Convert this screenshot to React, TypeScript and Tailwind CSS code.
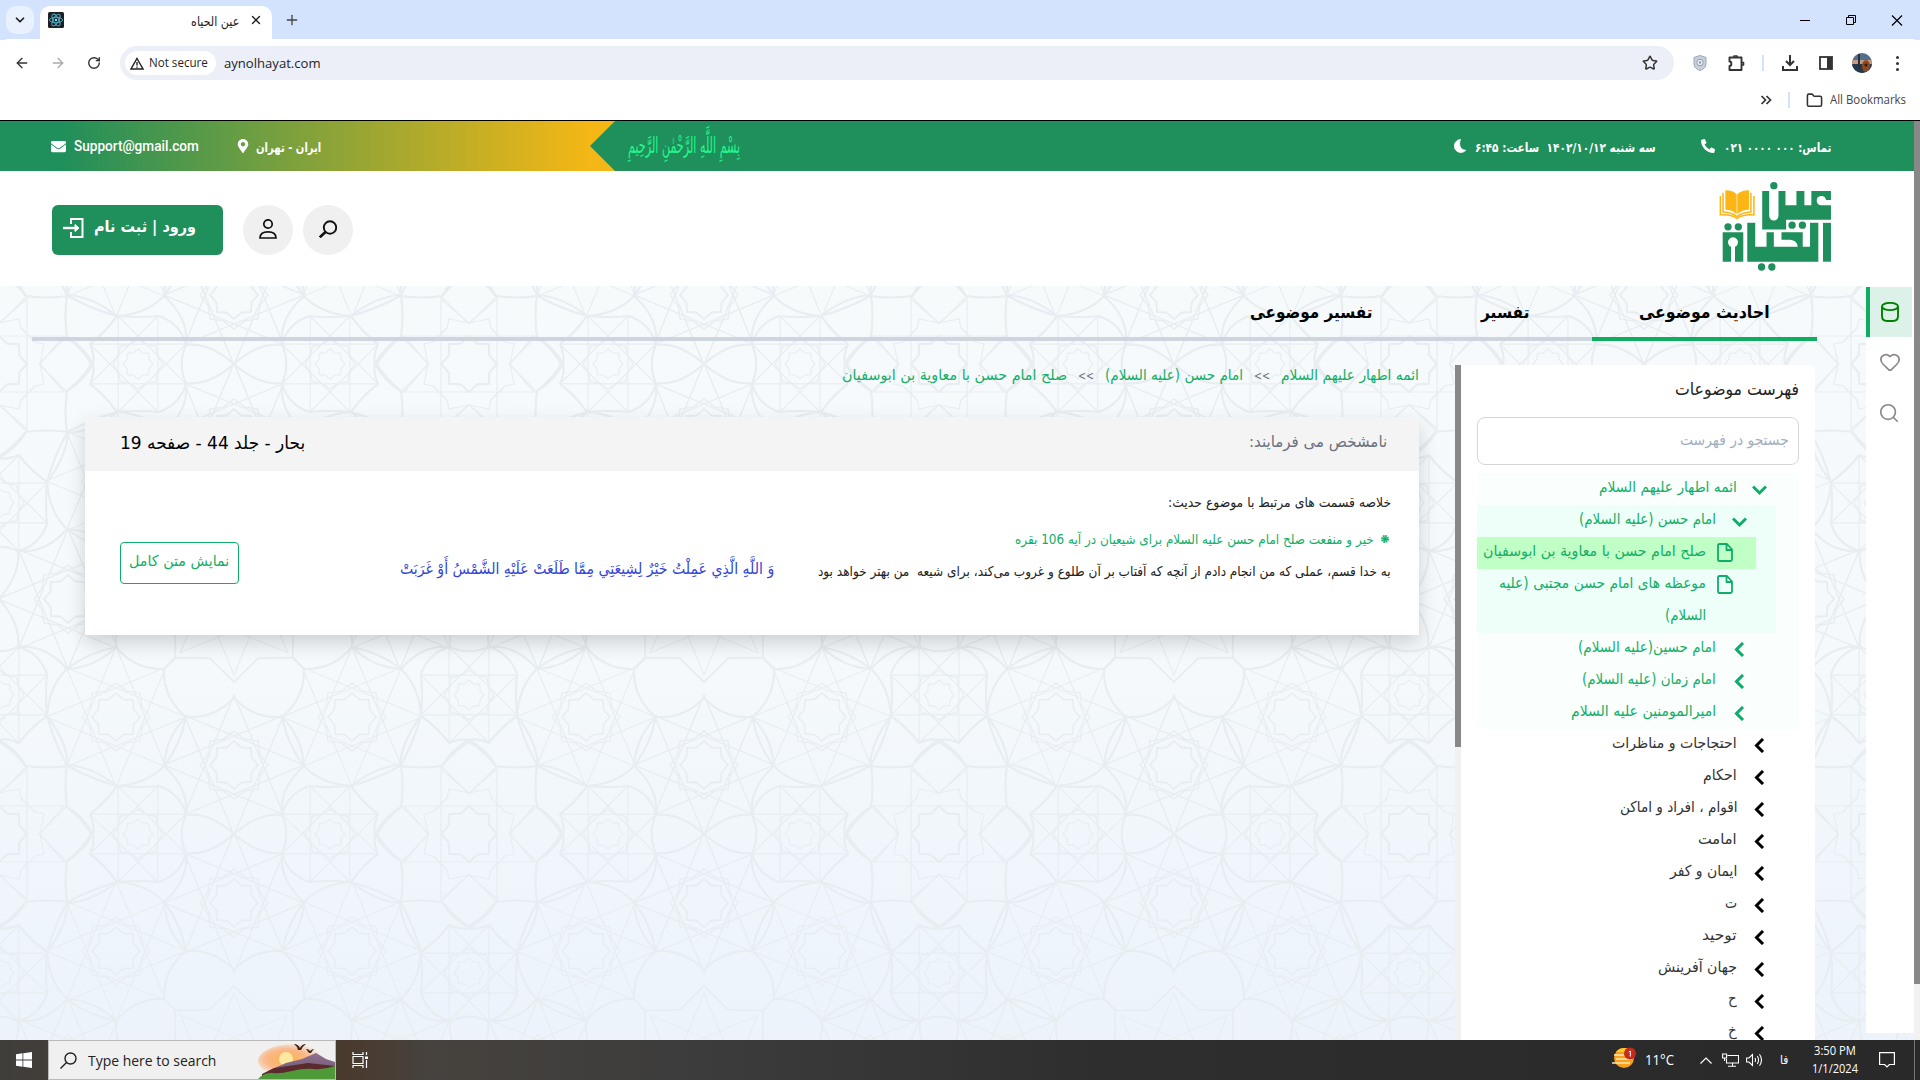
import React, { useLayoutEffect, useRef, useState } from "react";
import {
  ArrowLeft, ArrowRight, ChevronDown, Folder, Heart, Plus, RotateCw, Search, Star, X,
} from "lucide-react";
import { FaPhoneAlt, FaMapMarkerAlt, FaEnvelope } from "react-icons/fa";

type FitProps = { w: number; className?: string; ltr?: boolean; children: React.ReactNode };

/** One line of text squeezed or stretched to a set width. */
function Fit({ w, className = "", ltr = false, children }: FitProps) {
  const ref = useRef<HTMLSpanElement>(null);
  const [k, setK] = useState(1);
  useLayoutEffect(() => {
    if (ref.current) setK(w / ref.current.offsetWidth);
  }, [w]);
  return (
    <span dir={ltr ? "ltr" : "rtl"} className="flex shrink-0" style={{ width: w }}>
      <span
        ref={ref}
        className={`shrink-0 whitespace-pre ${ltr ? "origin-left" : "origin-right"} ${className}`}
        style={{ transform: `scaleX(${k})` }}
      >
        {children}
      </span>
    </span>
  );
}

function star(cx: number, cy: number, R: number, r: number) {
  let d = "";
  for (let i = 0; i < 16; i++) {
    const a = (i * Math.PI) / 8;
    const q = i % 2 ? r : R;
    d += `${i ? "L" : "M"}${(cx + q * Math.sin(a)).toFixed(1)},${(cy - q * Math.cos(a)).toFixed(1)}`;
  }
  return d + "Z";
}

function octagram(cx: number, cy: number, R: number, turn: number) {
  let d = "";
  for (let i = 0; i < 8; i++) {
    const a = (i * 3 * Math.PI) / 4 + turn;
    d += `${i ? "L" : "M"}${(cx + R * Math.sin(a)).toFixed(1)},${(cy - R * Math.cos(a)).toFixed(1)}`;
  }
  return d + "Z";
}

function Eighth() {
  return (
    <g>
      <g strokeWidth="2.2">
        <path d="M27,68Q48,65 69,68Q68,92 48,118M0,92Q12,86 27,68" />
        <path d="M68,27Q84,18 94,0M91,20Q105,30 118,48Q140,46 160,48M160,48Q182,40 187,19M118,48Q148,50 165,68M187,19Q190,46 165,68M91,20Q96,8 94,0" />
        <path d="M235,0Q210,22 187,19Q182,8 183,0M165,68Q181,88 187,117Q167,97 165,68M187,117Q215,115 235,136M187,117Q164,136 165,165" />
        <path d="M165,165L176,176M118,48Q90,56 69,68" />
      </g>
      <g strokeWidth="1.2">
        <path d="M28,0V68M0,40L28,68M65,28L41,0L45,20L36,22M36,22L22,36" />
        <path d={octagram(139, 0, 52, Math.PI / 8)} />
        <path d={star(139, 0, 15, 12)} />
        <path d={star(139, 0, 25, 21)} />
        <path d={octagram(235, 69, 70, 0)} />
        <path d={star(235, 69, 24, 19)} strokeWidth="1.6" />
        <path d={star(235, 69, 34, 28)} />
      </g>
    </g>
  );
}

function Quarter() {
  return (
    <g>
      <Eighth />
      <g transform="matrix(0 1 1 0 0 0)"><Eighth /></g>
      <path strokeWidth="1.2" d={octagram(117, 117, 70, 0)} />
      <path strokeWidth="1.6" d={star(117, 117, 24, 19)} />
      <path strokeWidth="1.2" d={star(117, 117, 34, 28)} />
    </g>
  );
}

function Backdrop() {
  return (
    <svg className="absolute inset-0 h-full w-full" fill="none">
      <defs>
        <pattern id="tile" width="470" height="470" patternUnits="userSpaceOnUse" x="-1" y="78">
          <g stroke="#e8edf1" fill="none">
            <Quarter />
            <g transform="translate(470 0) scale(-1 1)"><Quarter /></g>
            <g transform="translate(0 470) scale(1 -1)"><Quarter /></g>
            <g transform="translate(470 470) scale(-1 -1)"><Quarter /></g>
            {[[0, 0], [470, 0], [0, 470], [470, 470]].map(([x, y]) => (
              <path key={`${x}-${y}`} strokeWidth="2.2" d={star(x, y, 28, 22)} />
            ))}
            <path strokeWidth="1.8" d={star(235, 235, 83, 64)} />
            <path strokeWidth="1.2" d={octagram(235, 235, 76, 0)} />
            <path strokeWidth="1.8" d={star(235, 235, 28, 22)} />
          </g>
        </pattern>
      </defs>
      <rect width="100%" height="100%" fill="url(#tile)" />
    </svg>
  );
}

function ReactMark() {
  return (
    <svg viewBox="0 0 16 16" className="size-4">
      <rect width="16" height="16" rx="1.5" fill="#1c1f24" />
      <g fill="none" stroke="#4fb3cf" strokeWidth="0.9">
        <ellipse cx="8" cy="8" rx="6.6" ry="2.7" />
        <ellipse cx="8" cy="8" rx="6.6" ry="2.7" transform="rotate(60 8 8)" />
        <ellipse cx="8" cy="8" rx="6.6" ry="2.7" transform="rotate(120 8 8)" />
      </g>
      <circle cx="8" cy="8" r="1.2" fill="#8be0f5" />
    </svg>
  );
}

function Browser() {
  return (
    <div className="h-[121px] border-b border-black bg-white font-['Open_Sans',sans-serif] text-[#1f1f1f]">
      <div className="flex h-10 bg-[#d3e2fd]">
        <div className="mt-1.5 ml-1.5 flex h-7 w-7 items-center justify-center rounded-[10px] bg-[#e9f0fe]">
          <ChevronDown className="size-3.5" strokeWidth={3} />
        </div>
        <div className="mt-1.5 ml-1.5 flex h-[34px] w-[232px] items-center rounded-t-[10px] bg-white pr-[9px] pb-1.5 pl-2">
          <ReactMark />
          <div className="flex-1" />
          <div className="mt-1"><Fit w={48} className="font-['DejaVu_Sans',sans-serif] text-[13px]">عین الحیاه</Fit></div>
          <X className="ml-[10px] size-3.5" strokeWidth={2.4} />
        </div>
        <Plus className="mt-3 ml-[12px] size-4 text-[#444]" strokeWidth={2} />
        <div className="flex-1" />
        <svg className="mt-2.5 mr-[13px] h-5 w-28" fill="none" stroke="#000" strokeWidth="1">
          <path d="M5 10.5h10" />
          <path d="M51.5 7.5h7v7h-7zM53.5 7.500v-2h7v7h-2" />
          <path d="M97 5.500l10 10M107 5.500l-10 10" strokeWidth="1.200" />
        </svg>
      </div>
      <div className="-mt-px flex h-[47px] items-center rounded-t-lg bg-white pt-px pl-[14px]">
        <ArrowLeft className="size-4 text-[#333]" />
        <ArrowRight className="ml-5 size-4 text-[#aaa]" />
        <RotateCw className="ml-[21px] size-3.5 text-[#333]" strokeWidth={2.4} />
        <div className="ml-[19px] flex h-[34px] w-[1554px] items-center rounded-full bg-[#eceef8] pr-4 pl-[5px]">
          <div className="flex h-6 w-[91px] items-center rounded-full bg-white pl-[5px]">
            <svg viewBox="0 0 14 13" className="mr-[5px] h-[13px] w-3.5" fill="none" stroke="#222" strokeWidth="1.400">
              <path d="M7 1.500L13 12H1Z" /><path d="M7 5v3.500M7 9.500v1.200" />
            </svg>
            <Fit ltr w={59} className="text-xs">Not secure</Fit>
          </div>
          <div className="ml-2"><Fit ltr w={97} className="text-[13.5px]">aynolhayat.com</Fit></div>
          <div className="flex-1" />
          <Star className="size-4 text-[#333]" strokeWidth={2.2} />
        </div>
        <svg viewBox="0 0 14 16" className="ml-[19px] h-4 w-3.5">
          <path d="M7 .5l6 2v6c0 4-3 6-6 7-3-1-6-3-6-7v-6z" fill="#c9cfda" stroke="#9aa5b8" />
          <circle cx="7" cy="7.500" r="3.200" fill="#eef1f6" stroke="#8d99b0" />
          <circle cx="7" cy="7.500" r="1.200" fill="#8d99b0" />
        </svg>
        <svg viewBox="0 0 18 18" className="ml-[20px] size-[18px]" fill="none" stroke="#333" strokeWidth="1.9" strokeLinejoin="round">
          <path d="M2.500 3.500h12v12.500h-12v-4c2.500 0 2.500-4.500 0-4.500z" /><path d="M7 3V2h3v1M15 8.500h1.500v2.500H15" strokeWidth="1.600" />
        </svg>
        <div className="ml-[17px] h-4 w-0.5 bg-[#d3e2fd]" />
        <svg viewBox="0 0 16 16" className="ml-[18px] size-4" fill="none" stroke="#333" strokeWidth="2">
          <path d="M8 0v9.500M4 6l4 4 4-4M1 11v4h14v-4" />
        </svg>
        <svg viewBox="0 0 14 14" className="ml-[21px] size-3.5">
          <rect x="1" y="1" width="12" height="12" fill="none" stroke="#333" strokeWidth="1.800" /><path d="M8 1h5v12H8z" fill="#333" />
        </svg>
        <svg viewBox="0 0 20 20" className="ml-[19px] size-5">
          <defs><clipPath id="face"><circle cx="10" cy="10" r="10" /></clipPath></defs>
          <g clipPath="url(#face)">
            <path d="M0 0h20v20H0z" fill="#516e8c" /><path d="M0 7h20v4H0z" fill="#c79a80" /><path d="M0 11h20v9H0z" fill="#25384c" />
            <path d="M6 1h2v14H6z" fill="#26323f" /><ellipse cx="14" cy="13" rx="4" ry="6" fill="#8b4a22" /><circle cx="14" cy="12" r="1.500" fill="#2a1a10" />
          </g>
        </svg>
        <div className="ml-[24px] flex flex-col gap-[3px]">
          {[0, 1, 2].map((i) => <div key={i} className="size-[3px] rounded-full bg-[#333]" />)}
        </div>
      </div>
      <div className="flex h-[28px] items-center justify-end pr-[14px]">
        <svg viewBox="0 0 12 10" className="mr-[16px] h-2.5 w-3" fill="none" stroke="#333" strokeWidth="1.700">
          <path d="M1.500 1l4 4-4 4M6.500 1l4 4-4 4" />
        </svg>
        <div className="mr-4 h-4 w-0.5 bg-[#d3e2fd]" />
        <Folder className="mr-[7px] size-[17px] text-[#333]" strokeWidth={2.2} />
        <Fit ltr w={76} className="text-xs text-[#444]">All Bookmarks</Fit>
      </div>
    </div>
  );
}

function Logo() {
  return (
    <svg viewBox="897 546 338 268" className="h-[89px] w-[113px]" fill="#1f8f5b">
      <circle cx="1061" cy="557" r="11" />
      <path d="M1026 573H1047V648A14 14 0 0 0 1075 648V573H1096V616H1129V573H1153V616H1174V573H1233V600H1218A14 14 0 1 0 1204 616H1233V660H1098V689H1026Z" />
      <circle cx="1116" cy="676" r="11" /><circle cx="1147" cy="676" r="11" />
      <path d="M1209 669h24v117h-24z" />
      <path d="M981 669H1005V741H1039V697H1061V741H1133Q1131 722 1110 720H1084V697H1148V741H1170V669H1195V786H981Z" />
      <path d="M907 697H969V786H944V741A15 15 0 1 0 932 741V786H907Z" />
      <circle cx="923" cy="681" r="11" /><circle cx="954" cy="681" r="11" />
      <circle cx="1024" cy="802" r="11" /><circle cx="1055" cy="802" r="11" />
      <g fill="#fcb514">
        <path d="M915 571Q938 571 949 583V643Q935 630 915 629Z" />
        <path d="M986 571Q963 571 951 583V643Q966 630 986 629Z" />
      </g>
      <path d="M908 578V636Q935 637 950 650Q965 637 992 636V578M900 588V645Q935 643 950 656Q965 643 1001 645V588" fill="none" stroke="#fcb514" strokeWidth="4.500" />
    </svg>
  );
}

const ar = "font-['DejaVu_Sans',sans-serif]";

function Header() {
  return (
    <>
      <div className="flex h-[50px] items-center bg-[#1f8f5b] text-white">
        <div className="flex h-full w-[615px] items-center bg-[linear-gradient(90deg,#1f8f5b_60px,#f4b715_590px)] pl-[51px] [clip-path:polygon(0_0,100%_0,590px_50%,100%_100%,0_100%)]">
          <FaEnvelope className="size-[15px]" />
          <div className="ml-2"><Fit ltr w={125} className="font-[Roboto] text-[15px] font-medium">Support@gmail.com</Fit></div>
          <FaMapMarkerAlt className="ml-[37px] size-[14px]" />
          <div className="mt-1 ml-[6px]"><Fit w={65} className={`${ar} text-[12.5px] font-bold`}>ایران - تهران</Fit></div>
        </div>
        <div className="ml-[13px] text-[#22f78d]">
          <Fit w={112} className="font-['DejaVu_Sans',serif] text-[22px] leading-[40px]">بِسْمِ اللَّهِ الرَّحْمٰنِ الرَّحِيمِ</Fit>
        </div>
        <div className="flex-1" />
        <svg viewBox="0 0 12 14" className="mr-[9px] h-3.5 w-3"><path d="M6.500 .5A6.500 6.500 0 1 0 11.800 11.200C7.500 11.500 3.800 6.500 6.500 .5" fill="#fff" stroke="#fff" strokeWidth="0.8" /></svg>
        <div className="mt-1"><Fit w={181} className={`${ar} text-[12.5px] font-bold`}>سه شنبه ۱۴۰۲/۱۰/۱۲  ساعت: ۶:۴۵</Fit></div>
        <FaPhoneAlt className="mr-[9px] ml-[45px] size-3.5" />
        <div className="mt-1 mr-[83px]">
          <Fit w={107} className={`${ar} text-[12.5px] font-bold`}>تماس: <bdi dir="ltr">۰۲۱ ۰۰۰۰ ۰۰۰</bdi></Fit>
        </div>
      </div>
      <div className="flex h-[115px] items-start bg-white pr-[82px] pl-[52px]">
        <button className="mt-[34px] flex h-[50px] w-[171px] items-center rounded-md bg-[#1f8f5b] pl-[11px] text-white">
          <svg viewBox="0 0 21 20" className="-mt-1 mr-[10px] h-5 w-[21px]" fill="none" stroke="#fff" strokeWidth="2">
            <path d="M8 6V1h11.500v18H8v-5" /><path d="M0 10h13" strokeWidth="2.400" /><path d="M12 6.500L16 10l-4 3.500z" fill="#fff" strokeWidth="1" />
          </svg>
          <div className="-mt-1.5"><Fit w={102} className={`${ar} text-[16px] leading-8 font-bold`}>ورود | ثبت نام</Fit></div>
        </button>
        <div className="mt-[34px] ml-5 flex size-[50px] items-center justify-center rounded-full bg-[#f0f0f0]">
          <svg viewBox="0 0 18 20" className="-mt-0.5 h-5 w-[18px]" fill="none" stroke="#111" strokeWidth="1.700">
            <circle cx="9" cy="5" r="4.200" /><path d="M1 19C1 14.500 4 12.800 9 12.800S17 14.500 17 19Z" />
          </svg>
        </div>
        <div className="mt-[34px] ml-[10px] flex size-[50px] items-center justify-center rounded-full bg-[#f0f0f0]">
          <svg viewBox="0 0 18 18" className="-mt-0.5 size-[18px]" fill="none" stroke="#111" strokeWidth="1.900">
            <circle cx="11" cy="7.500" r="6.200" /><path d="M6.500 12L0.800 17.300" strokeWidth="2.600" />
          </svg>
        </div>
        <div className="flex-1" />
        <div className="mt-[11px]"><Logo /></div>
      </div>
    </>
  );
}

type NodeProps = { w: number; text: string; level?: 0 | 1; open?: boolean; green?: boolean };

function TreeRow({ w, text, level = 0, open, green }: NodeProps) {
  return (
    <div className={`flex h-8 shrink-0 items-center ${level ? "pr-[29px]" : "pr-8"} ${green ? "text-[#14ae67]" : "text-[#333]"}`}>
      <svg viewBox="0 0 15 15" className={`size-[15px] shrink-0 ${level ? "ml-[16px]" : "ml-[15px]"} ${green ? "text-[#0ead69]" : "text-black"}`} fill="none" stroke="currentColor" strokeWidth="3">
        <path d={open ? "M1 4.500L7.500 11L14 4.500" : "M11 1L4.500 7.500L11 14"} />
      </svg>
      <div className="-mt-1"><Fit w={w} className={`${ar} text-[15px]`}>{text}</Fit></div>
    </div>
  );
}

function Doc() {
  return (
    <svg viewBox="0 0 16 19" className="-mt-0.5 ml-[11px] h-[19px] w-4 shrink-0" fill="none" stroke="#0ead69" strokeWidth="1.800" strokeLinejoin="round">
      <path d="M1 2.500Q1 1 2.500 1H10L15 6.500V16.500Q15 18 13.500 18H2.500Q1 18 1 16.500ZM9.500 1V7H15" />
    </svg>
  );
}

const closedRows: [string, number][] = [
  ["احتجاجات و مناظرات", 125], ["احکام", 34], ["اقوام ، افراد و اماکن", 118], ["امامت", 39],
  ["ایمان و کفر", 67], ["ت", 12], ["توحید", 35], ["جهان آفرینش", 79], ["ح", 9], ["خ", 9],
];

function Topics() {
  return (
    <div dir="rtl" className="flex h-[675px] w-[360px] overflow-hidden">
      <div className="w-[354px] rounded-tr-md bg-white px-4 pt-[14px]">
        <Fit w={124} className={`${ar} text-[17px] leading-[20px] text-[#222]`}>فهرست موضوعات</Fit>
        <div className="mt-[18px] flex h-12 items-center rounded-lg border border-[#d6d6d6] pr-[9px] pb-0.5">
          <Fit w={109} className={`${ar} text-[15px] text-[#a0aec0]`}>جستجو در فهرست</Fit>
        </div>
        <div className="mt-2 bg-[#fafffd]">
          <TreeRow green open w={138} text="ائمه اطهار علیهم السلام" />
          <div className="mr-[23px] bg-[#edfff8] text-[#14ae67]">
            <TreeRow green open level={1} w={137} text="امام حسن (علیه السلام)" />
            <div className="mr-5 flex h-8 items-center bg-[#c0ffc5] pr-[23px]">
              <Doc /><div className="-mt-1"><Fit w={223} className={`${ar} text-[15px]`}>صلح امام حسن با معاویة بن ابوسفیان</Fit></div>
            </div>
            <div className="mr-5 flex h-16 items-start pr-[23px]">
              <div className="mt-2"><Doc /></div>
              <div className="-mt-0.5 leading-8">
                <Fit w={207} className={`${ar} text-[15px]`}>موعظه های امام حسن مجتبی (علیه</Fit>
                <Fit w={41} className={`${ar} text-[15px]`}>السلام)</Fit>
              </div>
            </div>
          </div>
          <div className="mr-[23px]">
            <TreeRow green level={1} w={138} text="امام حسین(علیه السلام)" />
            <TreeRow green level={1} w={134} text="امام زمان (علیه السلام)" />
            <TreeRow green level={1} w={145} text="امیرالمومنین علیه السلام" />
          </div>
        </div>
        {closedRows.map(([t, w]) => <TreeRow key={t} text={t} w={w} />)}
      </div>
      <div className="w-1.5 bg-[#f1f1f1]"><div className="h-[382px] bg-[#888]" /></div>
    </div>
  );
}

const verse = "وَ اللَّهِ الَّذِي عَمِلْتُ خَيْرٌ لِشِيعَتِي مِمَّا طَلَعَتْ عَلَيْهِ الشَّمْسُ أَوْ غَرَبَتْ";

function HadithCard() {
  return (
    <div className="mt-[31px] h-[218px] bg-white shadow-[0_8px_18px_rgba(0,0,0,0.16)]">
      <div className="flex h-[54px] items-center justify-between bg-[#f4f4f4] pr-8 pb-1 pl-[35px]">
        <Fit w={138} className={`${ar} text-[16px] text-[#6b7280]`}>نامشخص می فرمایند:</Fit>
        <Fit w={185} className={`${ar} text-[18px] text-black`}>بحار - جلد 44 - صفحه 19</Fit>
      </div>
      <div className="flex pr-[28px] pl-[35px]">
        <div className="w-[573px] pt-[19px] text-[#222]">
          <Fit w={223} className={`${ar} text-[13.5px] leading-6`}>خلاصه قسمت های مرتبط با موضوع حدیث:</Fit>
          <div className="mt-[13px] flex items-center text-[#14ae67]">
            <svg viewBox="0 0 10 10" className="mr-0.5 ml-[7px] size-[8px] overflow-visible"><circle cx="5" cy="5" r="3.600" fill="none" stroke="#0ead69" strokeWidth="2.600" strokeDasharray="2 .8" /><circle cx="5" cy="5" r="2.600" fill="#0ead69" /></svg>
            <Fit w={359} className={`${ar} text-[13.500px] leading-6`}>خیر و منفعت صلح امام حسن علیه السلام برای شیعیان در آیه 106 بقره</Fit>
          </div>
          <div className="mt-2"><Fit w={573} className={`${ar} text-[13.5px] leading-6`}>به خدا قسم، عملی که من انجام دادم از آنچه که آفتاب بر آن طلوع و غروب می‌کند، برای شیعه  من بهتر خواهد بود</Fit></div>
        </div>
        <div className="mt-[84px] mr-[44px]">
          <Fit w={374} className={`${ar} text-[15.500px] leading-7 text-[#3145d6]`}>{verse}</Fit>
        </div>
        <div className="flex-1" />
        <button className="mt-[71px] flex h-[42px] w-[119px] items-center justify-center rounded border border-[#0ead69] pb-1 text-[#14ae67]">
          <Fit w={100} className={`${ar} text-[15px]`}>نمایش متن کامل</Fit>
        </button>
      </div>
    </div>
  );
}

function Page() {
  return (
    <div className="flex h-[919px] overflow-hidden">
      <div className="w-[1914px]">
        <Header />
        <div className="relative h-[754px] bg-linear-to-b from-[#f7fafb] via-[#f5f9fb] to-[#ecf3fb]">
          <Backdrop />
          <div className="relative flex h-full">
            <div className="w-[1866px] pl-8">
              <div dir="rtl" className="flex h-[55px] w-[1785px] text-black">
                <div className="flex w-[225px] justify-center border-b-4 border-[#0ead62] pt-3">
                  <Fit w={131} className={`${ar} text-[17px] leading-7 font-bold`}>احادیث موضوعی</Fit>
                </div>
                <div className="flex flex-1 gap-[109px] border-b-4 border-[#cdd5df] pt-3 pr-[63px]">
                  <Fit w={48} className={`${ar} text-[17px] leading-7 font-bold`}>تفسیر</Fit>
                  <Fit w={122} className={`${ar} text-[17px] leading-7 font-bold`}>تفسیر موضوعی</Fit>
                </div>
              </div>
              <div dir="rtl" className="flex w-[1783px] pt-6">
                <Topics />
                <div className="mr-9 w-[1334px]">
                  <div className="flex h-[21px] items-center text-[#14ae67]">
                    <Fit w={138} className={`${ar} text-[15px]`}>ائمه اطهار علیهم السلام</Fit>
                    <span className="mx-[11px] w-4"><Fit ltr w={16} className={`${ar} text-xs text-gray-500`}>&lt;&lt;</Fit></span>
                    <Fit w={138} className={`${ar} text-[15px]`}>امام حسن (علیه السلام)</Fit>
                    <span className="mx-[11px] w-4"><Fit ltr w={16} className={`${ar} text-xs text-gray-500`}>&lt;&lt;</Fit></span>
                    <Fit w={225} className={`${ar} text-[15px]`}>صلح امام حسن با معاویة بن ابوسفیان</Fit>
                  </div>
                  <HadithCard />
                </div>
              </div>
            </div>
            <div className="h-[747px] w-12 bg-white pt-px">
              <div className="flex h-[50px] w-[46px] items-center justify-center border-l-4 border-[#0ead62] bg-[#dcf2e8] pr-0.5">
                <svg viewBox="0 0 18 20" className="h-5 w-[18px]" fill="none" stroke="#008000" strokeWidth="1.900">
                  <ellipse cx="9" cy="4.500" rx="8" ry="3.600" /><path d="M1 4.500V14Q1 19 6 19H12Q17 19 17 14V4.500" />
                </svg>
              </div>
              <Heart className="mt-[14px] ml-[13px] size-[22px] text-[#888]" strokeWidth={1.8} />
              <Search className="mt-[29px] ml-[12px] size-[22px] text-[#888]" strokeWidth={1.8} />
            </div>
          </div>
        </div>
      </div>
      <div className="w-1.5 bg-[#f1f1f1]"><div className="h-[863px] bg-[#888]" /></div>
    </div>
  );
}

function Sunset() {
  return (
    <svg viewBox="0 0 77 38" className="h-[38px] w-[77px]">
      <defs>
        <radialGradient id="glow" cx="0.4" cy="0.45" r="0.5"><stop offset="0" stopColor="#ffb04a" /><stop offset="0.6" stopColor="#f9b98a" /><stop offset="1" stopColor="#f0f0f0" /></radialGradient>
        <linearGradient id="hill" x1="0" y1="0" x2="0" y2="1"><stop offset="0" stopColor="#8d6f8c" /><stop offset="1" stopColor="#6c5777" /></linearGradient>
      </defs>
      <ellipse cx="36" cy="20" rx="36" ry="17" fill="url(#glow)" />
      <circle cx="28" cy="18" r="7" fill="#ffe9a0" />
      <path d="M10 30L28 22 44 18 58 12 68 18 77 21V38H10Z" fill="url(#hill)" />
      <path d="M4 33L16 27 30 25 50 22 77 25V38H4Z" fill="#5a2a2e" />
      <path d="M0 38Q6 31 14 32T34 30T56 28T77 25V38Z" fill="#4f9a38" />
      <path d="M36 3q4 0 6 4 2-4 6-4-3 2-5 6h-3q-1-4-4-6M48 8q3 0 4 2 2-2 4-2-2 2-3 4h-2z" fill="#3b2418" />
    </svg>
  );
}

function Taskbar() {
  return (
    <div className="flex h-10 items-center bg-[linear-gradient(90deg,#403e3b_0,#4a3a2e_350px,#46423e_430px,#3c3c3c_700px,#2e2e2f_1100px,#29292a_100%)] font-['Open_Sans',sans-serif] text-white">
      <svg viewBox="0 0 16 16" className="mx-4 size-4" fill="#fff"><path d="M0 2.200L6.500 1.300V7.600H0ZM7.300 1.200L16 0V7.600H7.300ZM0 8.400H6.500V14.700L0 13.800ZM7.300 8.400H16V16L7.300 14.800Z" /></svg>
      <div className="flex h-10 w-72 items-center border border-[#b9b9b9] bg-[#f0f0f0] pl-[11px] text-[#222]">
        <svg viewBox="0 0 17 17" className="mr-3 size-[17px]" fill="none" stroke="#222" strokeWidth="1.400"><circle cx="10.500" cy="6.500" r="5.500" /><path d="M6.500 10.500L.5 16.500" /></svg>
        <div className="mt-0.5 -ml-px"><Fit ltr w={128} className="text-[14.500px]">Type here to search</Fit></div>
        <div className="flex-1" />
        <Sunset />
      </div>
      <svg viewBox="0 0 17 16" className="ml-4 h-4 w-[17px]" fill="none" stroke="#fff" strokeWidth="1.200"><path d="M1 0v2.500h10V0M1 16v-2.500h10V16M1 4.500h10v7H1zM14.500 0v3M14.500 8v8" /><path d="M13 4.500h3v2.500h-3z" fill="#fff" stroke="none" /></svg>
      <div className="flex-1" />
      <svg viewBox="0 0 24 22" className="-mt-1 mr-[9px] h-[22px] w-6">
        <circle cx="12" cy="11" r="10" fill="#f9a01b" /><path d="M4 5a10 10 0 0 1 16 0z" fill="#ffc928" />
        <path d="M2 8h12M4 12h16M0 16h18" stroke="#ffe9b5" strokeWidth="1.500" />
        <circle cx="18" cy="6.500" r="6" fill="#c42b1c" /><path d="M16.800 5l1.500-1v5.500" fill="none" stroke="#fff" strokeWidth="1" />
      </svg>
      <Fit ltr w={29} className="text-[14.500px]">11°C</Fit>
      <svg viewBox="0 0 12 7" className="ml-[26px] h-[7px] w-3" fill="none" stroke="#fff" strokeWidth="1.200"><path d="M.5 6.500L6 1l5.500 5.500" /></svg>
      <svg viewBox="0 0 17 14" className="ml-[10px] h-3.5 w-[17px]" fill="none" stroke="#fff" strokeWidth="1.100"><path d="M5.500 2.500h11v7.500H4.500V6M10.500 10v3M6 13.200h8M.6 1h4v4h-4zM2.600 5v3" /></svg>
      <svg viewBox="0 0 17 14" className="ml-[7px] h-3.5 w-[17px]" fill="none" stroke="#fff" strokeWidth="1.100"><path d="M.6 5h2.400L6.500 1.500v11L3 9H.6zM9 5q1 2 0 4M11.300 3q2.500 4 0 8M13.500 1.200q4 5.800 0 11.600" /></svg>
      <div className="ml-[17px]"><Fit w={8} className={`${ar} text-xs`}>فا</Fit></div>
      <div className="ml-6 flex w-[46px] flex-col items-center text-[12px] leading-[18px]">
        <Fit ltr w={42}>3:50 PM</Fit>
        <Fit ltr w={46}>1/1/2024</Fit>
      </div>
      <svg viewBox="0 0 16 16" className="mr-[19px] ml-[21px] size-4" fill="none" stroke="#fff" strokeWidth="1.200"><path d="M.6.6h14.800v11.900h-5L8 15l-2.400-2.500h-5z" /></svg>
      <div className="mr-[5px] h-10 w-px bg-[#777]" />
    </div>
  );
}

export default function App() {
  return (
    <div className="h-[1080px] w-[1920px] overflow-hidden bg-white">
      <Browser />
      <Page />
      <Taskbar />
    </div>
  );
}
